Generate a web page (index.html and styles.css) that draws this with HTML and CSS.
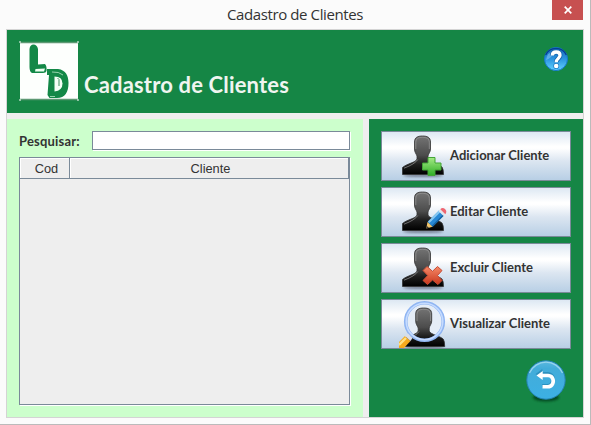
FILE: index.html
```html
<!DOCTYPE html>
<html lang="pt-BR">
<head>
<meta charset="utf-8">
<title>Cadastro de Clientes</title>
<link rel="stylesheet" href="styles.css">
</head>
<body>
<svg class="defs" width="0" height="0" aria-hidden="true">
  <defs>
    <linearGradient id="body" x1="0" y1="0" x2="0" y2="1">
      <stop offset="0" stop-color="#747474"/><stop offset=".5" stop-color="#4c4c4c"/><stop offset=".75" stop-color="#1c1c1c"/><stop offset="1" stop-color="#000"/>
    </linearGradient>
    <linearGradient id="plus" x1="0" y1="0" x2="0" y2="1"><stop offset="0" stop-color="#a5ea86"/><stop offset="1" stop-color="#2eae25"/></linearGradient>
    <linearGradient id="cross" x1="0" y1="0" x2="0" y2="1"><stop offset="0" stop-color="#f58a68"/><stop offset="1" stop-color="#c9361c"/></linearGradient>
    <linearGradient id="help" x1="0" y1="0" x2="0" y2="1"><stop offset="0" stop-color="#1565b8"/><stop offset=".5" stop-color="#2b95e0"/><stop offset="1" stop-color="#62d2ff"/></linearGradient>
    <linearGradient id="back" x1="0" y1="0" x2="0" y2="1"><stop offset="0" stop-color="#5bb9df"/><stop offset=".2" stop-color="#43acd9"/><stop offset="1" stop-color="#3cb0e4"/></linearGradient>
    <filter id="soft" x="-30%" y="-100%" width="160%" height="300%"><feGaussianBlur stdDeviation="1.2"/></filter>
    <symbol id="person" viewBox="0 0 50 48">
      <ellipse cx="24" cy="41.500" rx="20" ry="1.6" fill="#334" opacity=".5" filter="url(#soft)"/>
      <path d="M15.5 8C15.5 3.500 18.500 2 23.500 2S31.500 3.500 31.500 8V15C31.500 18 29.500 19.500 29 22V25C30 28.500 40 30 43 33Q44.500 35 44.500 40.500H3.500V33.500C8 29.500 17 28.500 18 25V22C17 19.500 15.500 18 15.500 15Z" fill="url(#body)" stroke="#333" stroke-width=".8"/>
      <path d="M16.800 15V8.500C16.800 4.500 19.500 3.300 23.500 3.300S30.300 4.500 30.300 8.500V15M18.800 25.500Q16 30 5 34.200" fill="none" stroke="#999" stroke-width=".7"/>
    </symbol>
  </defs>
</svg>
<div class="window">
  <header class="titlebar">
    <span class="caption">Cadastro de Clientes</span>
    <button class="close" aria-label="Fechar"><svg width="8" height="8" viewBox="0 0 8 8"><path d="M.7.7 7.300 7.300M7.300.7.7 7.300" stroke="#fff" stroke-width="1.7"/></svg></button>
  </header>
  <main class="content">
    <section class="banner">
      <svg class="logo" width="60" height="60" viewBox="0 0 60 60">
        <rect x="1" y="1" width="58" height="58" fill="#fdfffd"/>
        <path d="M1 1.500H59M1 58.500H59" stroke="#5d9973" stroke-width="1.500"/>
        <path d="M0 1H2M58 1H60M0 59H2M58 59H60" stroke="#fff"/>
        <path d="M10.500 8Q11 3.500 14.500 3.500T19 8V23.500L26 23Q28 25 27.500 30Q27 32 24 32H13Q10.500 31 10.500 26Z" fill="#138847"/>
        <path d="M16.500 28 26 27.500 25 30.500H16Z" fill="#eaffef"/>
        <path d="M28 28H39C47 29 49.500 35 49.500 42C49.500 51 46 57 38 57H30.500L28.500 54 30 34H28Z" fill="#138847"/>
        <path d="M35.500 35.500Q43.500 35.500 43.500 42.500T35.500 50.500Z" fill="#f4fff6"/>
        <path d="M33 31Q40 30.500 44 34M31 55.500H36" fill="none" stroke="#b9e6c7" stroke-width=".8"/>
        <path d="M38.500 37 40 38.500V45" fill="none" stroke="#438f61" stroke-width="1"/>
      </svg>
      <h1>Cadastro de Clientes</h1>
      <svg class="help" width="24" height="24" viewBox="0 0 24 24">
        <circle cx="12" cy="12" r="11.500" fill="url(#help)" stroke="#1677cf"/>
        <path d="M1.700 8A11.300 11.300 0 0 1 22.300 8" fill="none" stroke="#073f91" stroke-width="1.300"/>
        <path d="M2 13Q3 5 12 3Q7 12 2 13Z" fill="#8bc9f4" opacity=".55"/>
        <path d="M8.300 8.500Q8.400 5 12.200 5T16 8.300C16 11.500 12.300 11.300 12.200 15.300" fill="none" stroke="#1664ae" stroke-width="4.800"/>
        <circle cx="12.200" cy="19" r="2.900" fill="#1976c2"/>
        <path d="M8.300 8.500Q8.400 5 12.200 5T16 8.300C16 11.500 12.300 11.300 12.200 15.300" fill="none" stroke="#fff" stroke-width="3.300"/>
        <circle cx="12.200" cy="19" r="2.300" fill="#fff"/>
      </svg>
    </section>
    <div class="columns">
      <section class="list">
        <label class="search"><span>Pesquisar:</span><input type="text"></label>
        <div class="table">
          <div class="thead"><div class="th">Cod</div><div class="th">Cliente</div></div>
        </div>
      </section>
      <nav class="actions">
        <button class="action">
          <svg width="50" height="48" viewBox="0 0 50 48"><g transform="translate(0 2)"><use href="#person" width="50" height="48"/>
            <path d="M29 23.500H36V29H42V36H36V41.500H29V36H23.500V29H29Z" fill="url(#plus)" stroke="#43a536"/></g>
          </svg><span>Adicionar Cliente</span>
        </button>
        <button class="action">
          <svg width="50" height="48" viewBox="0 0 50 48"><use href="#person" y="2" width="50" height="48"/>
            <path d="M28.500 34 40 22.500 45 27.500 33.500 39Z" fill="#2788d5"/>
            <path d="M29.700 34.200 41 23" stroke="#86c7f1" stroke-width="2.200"/>
            <path d="M33 38.500 44.500 27" stroke="#15609f" stroke-width="1.200"/>
            <path d="M28.500 34 33.500 38.700 27.300 40.500Z" fill="#f3c66c"/><path d="M27.900 38 30 39.700 27.300 40.500Z" fill="#333"/>
            <path d="M39.500 23 41.300 21.200 46.300 26.200 44.500 28Z" fill="#e1e6ed"/>
            <path d="M41.300 21.200Q43.500 18.800 46 21T46.300 26.200Z" fill="#ef6670"/>
          </svg><span>Editar Cliente</span>
        </button>
        <button class="action">
          <svg width="50" height="48" viewBox="0 0 50 48"><g transform="translate(0 2)"><use href="#person" width="50" height="48"/>
            <path d="M28 20.500 33.500 25.300 38.500 20.500 43 24.500 38.500 29.500 43 34.500 39 38.500 33.500 34 28.500 38.500 24 34.500 28.700 29.500 24 24.500Z" fill="url(#cross)" stroke="#c74b35" stroke-linejoin="round"/></g>
          </svg><span>Excluir Cliente</span>
        </button>
        <button class="action">
          <svg width="50" height="48" viewBox="0 0 50 48">
            <circle cx="25.500" cy="21.500" r="18" fill="#e5edf7"/>
            <g transform="translate(1.200 6)"><use href="#person" width="50" height="48"/></g>
            <circle cx="25.500" cy="21.500" r="18.800" fill="none" stroke="#8fb5f2" stroke-width="3.600"/>
            <circle cx="25.500" cy="21.500" r="18.300" fill="none" stroke="#c5dbff" stroke-width="1.600"/>
            <path d="M6 36 11.500 41 5 48H-1V43Z" fill="#f6a91c"/>
            <path d="M7 38 0 45" stroke="#ffe083" stroke-width="2.400"/>
            <path d="M6 36 9 33.500 13.500 38 11.500 41Z" fill="#d9dee8"/>
          </svg><span>Visualizar Cliente</span>
        </button>
        <svg class="back" width="44" height="50" viewBox="0 0 44 50">
          <ellipse cx="22" cy="39.500" rx="13" ry="4" fill="#063e1d" opacity=".8" filter="url(#soft)"/>
          <circle cx="22" cy="22" r="19.200" fill="url(#back)" stroke="#2482b4"/>
          <path d="M5.500 15A18 18 0 0 1 38.500 15" fill="none" stroke="#96d3ed" stroke-width="1.300"/>
          <path d="M12 16.800 18.700 11.800V15H24C34 15 34 30.500 24 30.500H18.500V26.800H24C28.500 26.800 28.500 18.800 24 18.800H18.700V21.500Z" fill="#1f7fac" opacity=".6" transform="translate(-.4 -.9)"/>
          <path d="M12.500 17.500 18.700 13V15.700H24C33.500 15.700 33.500 30.500 24 30.500H18.500V27H24C28.500 27 28.500 19.300 24 19.300H18.700V22Z" fill="#fff"/>
        </svg>
      </nav>
    </div>
  </main>
</div>
</body>
</html>
```
FILE: styles.css
```css
* { box-sizing: border-box; }
body { margin: 0; font-family: Lato, "Liberation Sans", sans-serif; color: #333; }
button { padding: 0; font: inherit; color: inherit; border-radius: 0; }
.defs { position: absolute; }
.window {
  width: 591px; height: 425px; padding: 0 7px 6px 6px;
  display: flex; flex-direction: column;
  background: #fbfbfb; border-right: 1px solid #bbb; border-bottom: 1px solid #bbb;
}
.titlebar { height: 29px; display: flex; justify-content: flex-end; }
.caption {
  flex: 1; padding-left: 32px; text-align: center; white-space: nowrap;
  font: 15px/29px "Open Sans", sans-serif; letter-spacing: -0.4px;
}
.close {
  width: 31px; height: 20px; border: 0; background: #c75050;
  display: flex; align-items: center; justify-content: center;
}
.content {
  flex: 1; min-height: 0; border: 1px solid #d4d4d4; background: #eee;
  display: flex; flex-direction: column; gap: 6px; margin-right: -1px;
}
.banner { height: 83px; background: #158645; display: flex; padding: 11px 15px 0 12px; }
h1 { margin: 30px auto 0 5px; font-size: 22px; line-height: 28px; letter-spacing: 0.16px; color: #f0f5f0; white-space: nowrap; }
.help { margin-top: 6px; }
.columns { flex: 1; display: flex; gap: 6px; min-height: 0; }
.list { width: 356px; background: #cfc; padding: 12px 13px 11px 12px; display: flex; flex-direction: column; gap: 6px; }
.search { display: flex; height: 20px; font-size: 13px; font-weight: bold; line-height: 20px; }
.search span { width: 73px; white-space: nowrap; letter-spacing: 0.2px; }
.search input {
  flex: 1; min-width: 0; height: 19px; padding: 0; background: #fff;
  border: 1px solid #7a8a99; border-radius: 0; box-shadow: 1px 1px #fff; outline: 0;
}
.table { height: 248px; background: #eee; border: 1px solid #7a8a99; box-shadow: 1px 1px #fff; }
.thead { display: flex; height: 21px; font: 12.8px/21px "Liberation Sans", sans-serif; }
.th { flex: 1; text-align: center; border-right: 1px solid #7a8a99; border-bottom: 1px solid #7a8a99; box-shadow: inset 1px 1px #fff; }
.th:first-child { flex: none; width: 50px; padding-left: 4px; }
.th:last-child { padding-left: 3px; }
.actions { flex: 1; background: #158645; padding: 12px; display: flex; flex-direction: column; gap: 6px; }
.action {
  width: 190px; height: 50px; flex: none; padding-left: 17px;
  display: flex; align-items: center; overflow: hidden;
  border: 1px solid #7a8a99;
  background: linear-gradient(#dde8f3, #fff 30%, #fff 34%, #dce6f1 60%, #b8cfe5);
}
.action span { margin-left: 1px; padding-bottom: 2px; font-size: 13px; font-weight: bold; white-space: nowrap; }
.action svg { flex: none; }
.back { align-self: flex-end; margin: 3px 3px 0 0; flex: none; }
```
